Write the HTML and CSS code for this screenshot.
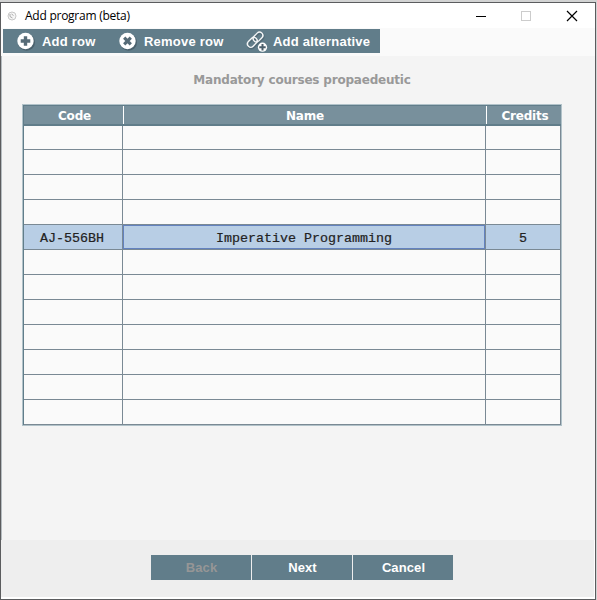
FILE: index.html
```html
<!DOCTYPE html>
<html lang="en">
<head>
<meta charset="utf-8">
<title>Add program (beta)</title>
<link rel="stylesheet" href="styles.css">
</head>
<body>
<div class="window">
  <header class="titlebar">
    <svg class="app-icon" width="10" height="10" viewBox="0 0 10 10"><circle cx="5" cy="5" r="4" fill="#f6f6f6" stroke="#c8c8c8"/><path d="M3 3v2.500L5.500 7M4.500 3l2 1.500" fill="none" stroke="#aaa"/></svg>
    <span class="title">Add program (beta)</span>
    <svg class="controls" width="110" height="12" viewBox="0 0 110 12"><path d="M0 6.500h10" stroke="#000"/><rect x="45.500" y="1.500" width="9" height="9" fill="none" stroke="#ccc"/><path d="M91 1l10 10M101 1l-10 10" stroke="#000" stroke-width="1.200"/></svg>
  </header>
  <div class="toolstrip">
    <nav class="toolbar">
      <button class="tool add"><svg width="20" height="20" viewBox="0 0 20 20"><circle cx="10.500" cy="11.200" r="8.500" fill="#34454f" opacity=".5"/><circle cx="9.500" cy="10" r="8.200" fill="#fff"/><path d="M9.500 5.200v9.600M4.700 10h9.600" stroke="#566b77" stroke-width="3.400"/></svg><span>Add row</span></button>
      <button class="tool remove"><svg width="20" height="20" viewBox="0 0 20 20"><circle cx="10.500" cy="11.200" r="8.500" fill="#34454f" opacity=".5"/><circle cx="9.500" cy="10" r="8.200" fill="#fff"/><path d="M6.200 6.700l6.600 6.600M12.800 6.700l-6.600 6.600" stroke="#566b77" stroke-width="3.200"/></svg><span>Remove row</span></button>
      <button class="tool alt"><svg width="22" height="22" viewBox="0 0 22 22"><g fill="none" stroke="#3f5460" stroke-width="2.600" opacity=".45"><rect x="-5.500" y="-3.300" width="11" height="6.600" rx="3.300" transform="translate(12.500 8) rotate(-46)"/><rect x="-5.500" y="-3.300" width="11" height="6.600" rx="3.300" transform="translate(6.900 13.300) rotate(-46)"/></g><g fill="none" stroke="#f4f6f7" stroke-width="1.400"><rect x="-5.500" y="-3.300" width="11" height="6.600" rx="3.300" transform="translate(12 7) rotate(-46)"/><rect x="-5.500" y="-3.300" width="11" height="6.600" rx="3.300" transform="translate(6.300 12.300) rotate(-46)"/></g><circle cx="16.500" cy="17.200" r="4.600" fill="#fff"/><path d="M16.500 14v6.400M13.300 17.200h6.400" stroke="#4c606c" stroke-width="2"/></svg><span>Add alternative</span></button>
    </nav>
  </div>
  <main class="content">
    <h1>Mandatory courses propaedeutic</h1>
    <div class="table">
      <div class="row head"><span>Code</span><span>Name</span><span>Credits</span></div>
      <div class="row first"><span></span><span></span><span></span></div>
      <div class="row"><span></span><span></span><span></span></div>
      <div class="row"><span></span><span></span><span></span></div>
      <div class="row"><span></span><span></span><span></span></div>
      <div class="row selected"><span>AJ-556BH</span><span class="focus">Imperative Programming</span><span>5</span></div>
      <div class="row"><span></span><span></span><span></span></div>
      <div class="row"><span></span><span></span><span></span></div>
      <div class="row"><span></span><span></span><span></span></div>
      <div class="row"><span></span><span></span><span></span></div>
      <div class="row"><span></span><span></span><span></span></div>
      <div class="row"><span></span><span></span><span></span></div>
      <div class="row last"><span></span><span></span><span></span></div>
    </div>
  </main>
  <footer class="footer">
    <button disabled>Back</button><button>Next</button><button>Cancel</button>
  </footer>
</div>
</body>
</html>
```
FILE: styles.css
```css
* { box-sizing: border-box; }
body { margin: 0; width: 597px; height: 600px; padding: 2px 1px 0 0; background: #d2d3d3; overflow: hidden; }
button { border: 0; padding: 0; margin: 0; font: bold 13px "Liberation Sans", Arial, sans-serif; letter-spacing: .22px; color: #fff; background: #617d8a; }
.window { width: 596px; height: 598px; border: 1px solid #5b5c5e; background: #fff; display: flex; flex-direction: column; }
.titlebar { height: 25px; display: flex; align-items: center; padding-left: 6px; background: #fff; }
.title { margin-left: 8px; font: 12px/24px "Open Sans", "Noto Sans", sans-serif; letter-spacing: -.25px; color: #000; }
.controls { margin-left: auto; margin-right: 9px; }
.toolstrip { height: 28px; padding: 1px 0 0 2px; background: #fafafa; }
.toolbar { display: flex; width: 377px; height: 24px; background: #617d8a; }
.tool { display: flex; align-items: center; height: 24px; white-space: nowrap; }
.tool svg { flex: none; }
.add { width: 102px; padding-left: 13px; }
.add span, .remove span { margin-left: 6px; }
.remove { width: 140px; padding-left: 13px; }
.alt { padding-left: 1px; }
.alt span { margin-left: 5px; }
.content { height: 484px; background: #f4f4f4; border-left: 1px solid #b5bcc0; padding: 14px 0 0 20px; }
h1 { margin: 0; width: 560px; height: 34px; font: bold 12px/20px "DejaVu Sans", Verdana, sans-serif; text-align: center; letter-spacing: -.2px; color: #999; }
.table { width: 540px; height: 322px; border: 1px solid #b1c2c9; background: #617d8a; padding: 1px; }
.row { display: grid; grid-template-columns: 98px 362px 74px; grid-template-rows: 24px; column-gap: 1px; height: 25px; padding: 0 1px 1px 0; width: 537px; background: #7a8994; font: 13.333px/28px "Liberation Mono", "Courier New", monospace; color: #222; text-align: center; }
.row span { background: #fafafa; min-width: 0; }
.head { height: 20px; grid-template-columns: 99px 362px 74px; grid-template-rows: 18px; background: #fff; border-bottom: 2px solid #617d8a; padding: 0; font: bold 12px/20px "DejaVu Sans", Verdana, sans-serif; letter-spacing: -.2px; color: #fff; }
.head span { height: 18px; background: #78909c; }
.head span:first-child, .head span:last-child { padding-left: 2px; }
.first { height: 24px; grid-template-rows: 23px; }
.row.selected span { height: 24px; background: #b8cee5; -webkit-text-stroke: .2px #222; }
.row.selected span:first-child { padding-right: 2px; }
.row .focus { border: 1px solid #6382bf; line-height: 26px; }
.footer { height: 58px; display: flex; justify-content: center; gap: 1px; padding: 15px 0 0 9px; background: #eee; border: solid #fff; border-width: 0 1px 1px 0; }
.footer button { width: 100px; height: 25px; padding-left: 1px; letter-spacing: .1px; }
.footer button:disabled { color: #969696; }
```
